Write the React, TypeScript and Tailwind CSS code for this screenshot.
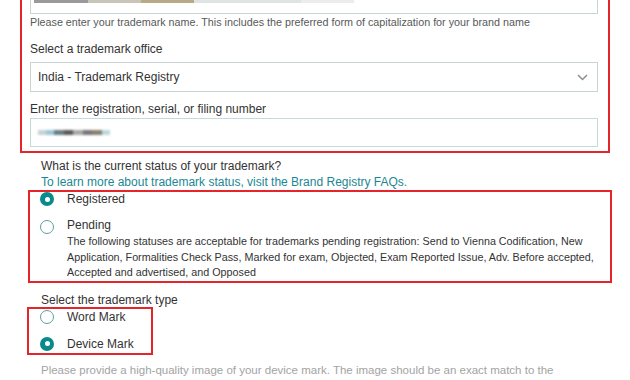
import React from "react";

function Radio({ checked }: { checked: boolean }) {
  return checked ? (
    <span className="flex h-[14px] w-[14px] shrink-0 items-center justify-center rounded-full bg-[#0a8a8a]">
      <span className="h-[5px] w-[5px] rounded-full bg-white" />
    </span>
  ) : (
    <span className="block h-[14px] w-[14px] shrink-0 rounded-full border border-[#5f9ea3] bg-white" />
  );
}

export default function App() {
  return (
    <div
      className="relative h-[380px] w-[630px] overflow-hidden bg-white text-[#333]"
      style={{ fontFamily: '"Liberation Sans", Arial, sans-serif' }}
    >
      {/* Box 1 */}
      <div className="ml-[20px] mt-[-20px] w-[590px] border-2 border-[#e5252c] pb-[4px] pl-[8px] pr-[10px]">
        <div className="relative h-[32px] border border-[#c9d4d4] bg-white">
          <div className="absolute left-[3px] top-[17px] flex h-[3px]">
            <span className="w-[54px] bg-[#9a9a9a]" />
            <span className="w-[53px] bg-[#c8c4b8]" />
            <span className="w-[53px] bg-[#b8aa84]" />
            <span className="w-[107px] bg-[#dfe3e2]" />
            <span className="w-[53px] bg-[#ececec]" />
          </div>
        </div>
        <div className="text-[10.75px] leading-[16px] text-[#565959]">
          Please enter your trademark name. This includes the preferred form of capitalization for your brand name
        </div>
        <div className="mt-[11px] text-[12px] leading-[16px] text-[#333]">Select a trademark office</div>
        <div className="mt-[5px] flex h-[30px] items-center justify-between border border-[#c9d4d4] pl-[7px] pr-[9px]">
          <span className="text-[12px] text-[#333]">India - Trademark Registry</span>
          <svg width="11" height="7" viewBox="0 0 11 7">
            <path d="M1 1 L5.5 5.5 L10 1" stroke="#8a8f8f" strokeWidth="1.5" fill="none" />
          </svg>
        </div>
        <div className="mt-[9px] text-[12px] leading-[16px] text-[#333]">Enter the registration, serial, or filing number</div>
        <div className="mt-[1px] flex h-[29px] items-center border border-[#c5dada] pl-[7px]">
          <div className="flex h-[5px] blur-[1px]">
            <span className="w-[8px] bg-[#c8d2d6]" />
            <span className="w-[8px] bg-[#9cc6d6]" />
            <span className="w-[10px] bg-[#6b7c84]" />
            <span className="w-[9px] bg-[#5a5a5a]" />
            <span className="w-[10px] bg-[#a8a8a8]" />
            <span className="w-[9px] bg-[#777]" />
            <span className="w-[10px] bg-[#8a8070]" />
            <span className="w-[8px] bg-[#bcd8dc]" />
          </div>
        </div>
      </div>

      <div className="ml-[41px] mt-[5px] text-[12px] leading-[16px] text-[#333]">What is the current status of your trademark?</div>
      <div className="ml-[41px] text-[12px] leading-[16px] text-[#1a8794]">
        To learn more about trademark status, visit the Brand Registry FAQs.
      </div>

      {/* Box 2 */}
      <div className="ml-[28px] w-[584px] border-2 border-[#e5252c] pl-[10px] pr-[10px]">
        <div className="flex h-[14px] items-center gap-[13px]">
          <Radio checked />
          <span className="text-[12px] leading-[16px]">Registered</span>
        </div>
        <div className="mt-[11px] flex items-start gap-[13px]">
          <div className="mt-[3px]">
            <Radio checked={false} />
          </div>
          <div>
            <div className="text-[12px] leading-[16px]">Pending</div>
            <div className="mt-[1px] text-[10.75px] leading-[15.5px] text-[#333]">
              The following statuses are acceptable for trademarks pending registration: Send to Vienna Codification, New Application, Formalities Check Pass, Marked for exam, Objected, Exam Reported Issue, Adv. Before accepted, Accepted and advertised, and Opposed
            </div>
          </div>
        </div>
      </div>

      <div className="ml-[41px] mt-[9px] text-[12px] leading-[16px] text-[#333]">Select the trademark type</div>

      {/* Box 3 */}
      <div className="ml-[27px] mt-[-1px] w-[126px] border-2 border-[#e5252c] pb-[2px] pl-[11px]">
        <div className="mt-[1px] flex h-[14px] items-center gap-[13px]">
          <Radio checked={false} />
          <span className="text-[12px]">Word Mark</span>
        </div>
        <div className="mt-[13px] flex h-[14px] items-center gap-[13px]">
          <Radio checked />
          <span className="text-[12px]">Device Mark</span>
        </div>
      </div>

      <div className="ml-[41px] mt-[7px] w-[522px] text-[11.5px] leading-[16px] text-[#a3a3a3]">
        Please provide a high-quality image of your device mark. The image should be an exact match to the image on the trademark registration or application so that it can be verified easily by our team.
      </div>
    </div>
  );
}
